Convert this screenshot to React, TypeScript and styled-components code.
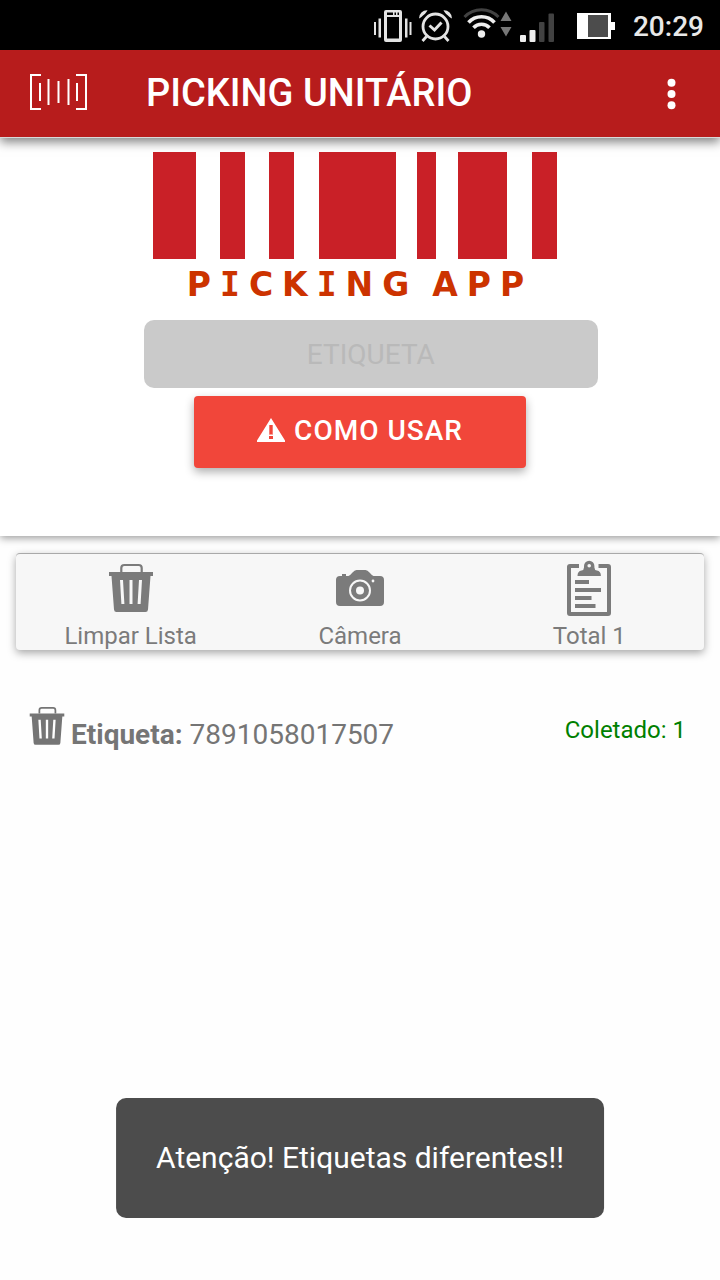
import React from "react";
import styled, { createGlobalStyle } from "styled-components";

const GlobalStyle = createGlobalStyle`
  * { box-sizing: border-box; }
  body {
    margin: 0;
    background: #fefefe;
    color: #757575;
    font-family: Roboto, "Liberation Sans", sans-serif;
    font-size: 24px;
    line-height: 28px;
  }
  button, input { font-family: inherit; }
  svg { display: block; flex: none; }
`;

const StatusBar = styled.div`
  display: flex;
  align-items: center;
  justify-content: flex-end;
  height: 50px;
  padding: 0 16px;
  background: #000;
`;

const Clock = styled.time`
  margin-left: 8px;
  padding-top: 4px;
  color: #e8e8e8;
  font-size: 28px;
  font-weight: 500;
  line-height: 32px;
`;

const Header = styled.header`
  position: relative;
  z-index: 1;
  display: flex;
  align-items: center;
  height: 88px;
  padding: 0 28px 2px;
  background: #b71c1c;
  border-bottom: 1px solid #d9d9d9;
  box-shadow: 0 4px 10px rgba(0, 0, 0, 0.5);
`;

const IconButton = styled.button`
  display: flex;
  padding: 0;
  border: 0;
  background: none;
  color: inherit;
  cursor: pointer;
`;

const Title = styled.h1`
  flex: 1;
  margin: 0 0 0 56px;
  color: #fff;
  font-size: 38px;
  font-weight: 500;
  line-height: 48px;
`;

const ScanPanel = styled.section`
  display: flex;
  flex-direction: column;
  align-items: center;
  padding: 14px 0 68px;
  background: #fff;
  box-shadow: 0 2px 8px rgba(0, 0, 0, 0.4);
`;

const Logo = styled.div`
  display: flex;
  flex-direction: column;
  align-items: center;
  padding-right: 10px;
`;

const Wordmark = styled.div`
  display: flex;
  gap: 14px;
  margin: 6px 0 15px;
  padding-left: 10px;
  color: #cc3300;
  font-family: "DejaVu Sans", sans-serif;
  font-size: 33px;
  font-weight: 700;
  letter-spacing: 9px;
  line-height: 40px;
`;

const SlabLetter = styled.span`
  font-family: "DejaVu Sans Mono", monospace;
`;

const LabelInput = styled.input`
  align-self: flex-start;
  width: 63%;
  height: 68px;
  margin-left: 20%;
  border: 0;
  border-radius: 10px;
  background: #cacaca;
  font-size: 28px;
  text-align: center;
  &::placeholder { color: #b9b9b9; opacity: 1; }
`;

const HelpButton = styled.button`
  display: flex;
  align-items: center;
  justify-content: center;
  gap: 9px;
  width: 46%;
  height: 72px;
  margin-top: 8px;
  padding: 0 0 4px;
  border: 0;
  border-radius: 4px;
  background: #f1463a;
  color: #fff;
  font-size: 28px;
  font-weight: 500;
  letter-spacing: 1px;
  box-shadow: 0 4px 10px rgba(0, 0, 0, 0.32);
  cursor: pointer;
`;

const Toolbar = styled.nav`
  display: grid;
  grid-template-columns: repeat(3, 1fr);
  margin: 17px 16px 0;
  border-top: 1px solid #a9a9a9;
  border-radius: 4px;
  background: #f7f7f7;
  box-shadow: 0 3px 8px rgba(0, 0, 0, 0.35);
`;

const ToolButton = styled.button`
  display: flex;
  flex-direction: column;
  align-items: center;
  gap: 6px;
  padding: 6px 0 0;
  border: 0;
  background: none;
  color: #7b7b7b;
  font-size: 24px;
  line-height: 28px;
  cursor: pointer;
`;

const ItemList = styled.ul`
  margin: 0;
  padding: 54px 34px 0 25px;
  list-style: none;
`;

const Item = styled.li`
  display: flex;
  align-items: flex-start;
  gap: 2px;
`;

const ItemText = styled.div`
  flex: 1;
  padding-top: 15px;
  font-size: 28px;
  line-height: 32px;
`;

const Collected = styled.span`
  padding-top: 12px;
  color: #008000;
`;

const Toast = styled.div`
  position: fixed;
  bottom: 62px;
  left: 50%;
  transform: translateX(-50%);
  padding: 40px;
  border-radius: 10px;
  background: #4c4c4c;
  color: #fff;
  font-size: 30px;
  line-height: 40px;
  white-space: nowrap;
`;

const VibrateIcon = () => (
  <svg width="45" height="34" viewBox="0 0 45 34" fill="#e4e4e4" aria-hidden="true">
    <path d="M4 14h2v13H4zM8.500 10.500h2.500v19H8.500zM35 10.500h2.500v19H35zM39.500 14h2v13h-2z" />
    <path fillRule="evenodd" d="M16 2h14a2 2 0 0 1 2 2v28a2 2 0 0 1-2 2H16a2 2 0 0 1-2-2V4a2 2 0 0 1 2-2zM17 9v21.500h12V9zM17 4.500v2.500h6V4.500zM24.500 4.500v2.500H26V4.500zM27.500 4.500v2.500H29V4.500z" />
  </svg>
);

const AlarmIcon = () => (
  <svg width="45" height="34" viewBox="0 0 45 34" fill="none" stroke="#e4e4e4" strokeWidth="2.800" aria-hidden="true">
    <circle cx="20.500" cy="18.500" r="12.500" />
    <path d="M11.500 28.500l-4 4.500M29.500 28.500l4 4.500" />
    <path d="M14.500 17.500l5 4.500 7-7.500" strokeWidth="3" />
    <path d="M4 10.500a8 8 0 0 1 8.500-8.300c-1 2.600-4.800 6-8.500 8.300zM37 10.500a8 8 0 0 0-8.500-8.300c1 2.600 4.800 6 8.500 8.300z" fill="#e4e4e4" stroke="none" />
  </svg>
);

const WifiIcon = () => (
  <svg width="55" height="34" viewBox="0 0 55 34" fill="none" strokeWidth="3" aria-hidden="true">
    <path d="M4.500 9a23.500 23.500 0 0 1 34 0" stroke="#424242" />
    <path d="M8.500 14.500a17.500 17.500 0 0 1 26 0M13.500 19.700a11 11 0 0 1 16 0" stroke="#eee" strokeWidth="3.600" />
    <circle cx="21.500" cy="26" r="3.700" fill="#eee" />
    <path d="M46 3.500l5.500 9.500h-11zM46 28.500l5.500-9.500h-11z" fill="#777" />
  </svg>
);

const SignalIcon = () => (
  <svg width="50" height="34" viewBox="0 0 50 34" aria-hidden="true">
    <rect x="5" y="27" width="6" height="7" rx="1" fill="#eee" />
    <rect x="14.500" y="22" width="6" height="12" rx="1" fill="#eee" />
    <rect x="24" y="14" width="5.500" height="20" rx="1" fill="#424242" />
    <rect x="33.500" y="5.500" width="5.500" height="28.500" rx="1" fill="#424242" />
  </svg>
);

const BatteryIcon = () => (
  <svg width="60" height="34" viewBox="0 0 60 34" aria-hidden="true">
    <path d="M12 5h34v9h4v8h-4v9H12z" fill="#fff" />
    <path d="M23 7h20v22H23z" fill="#4c4c4c" />
  </svg>
);

const BarcodeIcon = () => (
  <svg width="62" height="38" viewBox="0 0 62 38" fill="none" stroke="#fff" strokeWidth="2" aria-hidden="true">
    <path d="M13 1H3v34h10M48 1h10v34H48" />
    <path d="M12 9v18M20.500 5v26M30.500 7v22M40.500 5v26M49 9v18" />
  </svg>
);

const MoreIcon = () => (
  <svg width="40" height="40" viewBox="0 0 40 40" fill="#fff" aria-hidden="true">
    <circle cx="19.500" cy="9.700" r="4" />
    <circle cx="19.500" cy="21" r="4" />
    <circle cx="19.500" cy="32.300" r="4" />
  </svg>
);

const barcode = [
  [0, 43],
  [67, 25],
  [116, 25],
  [166, 77],
  [264, 19],
  [305, 49],
  [379, 25],
];

const BarcodeLogo = () => (
  <svg width="404" height="107" viewBox="0 0 404 107" fill="#c92027" aria-hidden="true">
    {barcode.map(([x, width]) => (
      <rect key={x} x={x} width={width} height="107" />
    ))}
  </svg>
);

const WarningIcon = () => (
  <svg width="28" height="24" viewBox="0 0 28 24" fill="#fff" aria-hidden="true">
    <path fillRule="evenodd" d="M14 0l14 22.500v1.500H0v-1.500zM12 7v9.500h4V7zM12 18v3h4v-3z" />
    <path d="M12 7h1v9h-1zM15 7h1v9h-1z" fillOpacity="0.300" />
  </svg>
);

const TrashIcon = ({ size }: { size: number }) => (
  <svg width={size} height={size} viewBox="0 0 56 56" fill="currentColor" aria-hidden="true">
    <path d="M18.300 12V8q0-3 3-3h14.400q3 0 3 3v4" fill="none" stroke="currentColor" strokeWidth="2.200" />
    <path fillRule="evenodd" d="M6 12h44v4h-2.500L45 49.500q-.2 2.500-2.500 2.500h-29q-2.300 0-2.500-2.500L8.500 16H6zM17 20l1.400 24h3L20 20zM26.500 20v24h3V20zM36 20l-1.400 24h3L39 20z" />
  </svg>
);

const CameraIcon = () => (
  <svg width="56" height="56" viewBox="0 0 56 56" aria-hidden="true">
    <path d="M4 20q0-4 4-4h2v-2h4v2h2.500q1.500-.5 4-3.500 2-2.500 4-2.500h9q2 0 4 2.500 2.500 3 4 3.500H48q4 0 4 4v22q0 4-4 4H8q-4 0-4-4z" fill="currentColor" />
    <circle cx="28" cy="30.500" r="10" fill="none" stroke="#f7f7f7" strokeWidth="2" />
    <circle cx="28" cy="30.500" r="4" fill="#f7f7f7" />
    <circle cx="41" cy="21" r="1.400" fill="#f7f7f7" />
  </svg>
);

const ClipboardIcon = () => (
  <svg width="56" height="56" viewBox="0 0 56 56" fill="currentColor" aria-hidden="true">
    <path d="M18 6H9q-1 0-1 1v46q0 1 1 1h38q1 0 1-1V7q0-1-1-1h-9.500" fill="none" stroke="currentColor" strokeWidth="4" strokeLinejoin="round" />
    <path fillRule="evenodd" d="M16.500 16q0-5 4-5.500 2.500-.5 2.500-3V6a5.200 5.200 0 0 1 10.400 0v1.500q0 2.500 2.500 3 4 .5 4 5.500zM28.200 4a1.800 1.800 0 1 0 0 3.600 1.800 1.800 0 0 0 0-3.600z" />
    <path d="M14 20h14v4H14zM14 28h26v4H14zM14 36h16.500v4H14zM14 44h20.500v4H14z" />
  </svg>
);

export default function App() {
  return (
    <>
      <GlobalStyle />
      <StatusBar>
        <VibrateIcon />
        <AlarmIcon />
        <WifiIcon />
        <SignalIcon />
        <BatteryIcon />
        <Clock>20:29</Clock>
      </StatusBar>
      <Header>
        <IconButton type="button" aria-label="Ler código de barras">
          <BarcodeIcon />
        </IconButton>
        <Title>PICKING UNITÁRIO</Title>
        <IconButton type="button" aria-label="Mais opções">
          <MoreIcon />
        </IconButton>
      </Header>
      <main>
        <ScanPanel>
          <Logo>
            <BarcodeLogo />
            <Wordmark>
              <span>
                P<SlabLetter>I</SlabLetter>CK<SlabLetter>I</SlabLetter>NG
              </span>
              <span>APP</span>
            </Wordmark>
          </Logo>
          <LabelInput type="text" placeholder="ETIQUETA" aria-label="Etiqueta" disabled />
          <HelpButton type="button">
            <WarningIcon />
            COMO USAR
          </HelpButton>
        </ScanPanel>
        <Toolbar>
          <ToolButton type="button">
            <TrashIcon size={56} />
            Limpar Lista
          </ToolButton>
          <ToolButton type="button">
            <CameraIcon />
            Câmera
          </ToolButton>
          <ToolButton type="button">
            <ClipboardIcon />
            Total 1
          </ToolButton>
        </Toolbar>
        <ItemList>
          <Item>
            <IconButton type="button" aria-label="Remover etiqueta">
              <TrashIcon size={44} />
            </IconButton>
            <ItemText>
              <b>Etiqueta:</b> 7891058017507
            </ItemText>
            <Collected>Coletado: 1</Collected>
          </Item>
        </ItemList>
      </main>
      <Toast role="status">Atenção! Etiquetas diferentes!!</Toast>
    </>
  );
}
